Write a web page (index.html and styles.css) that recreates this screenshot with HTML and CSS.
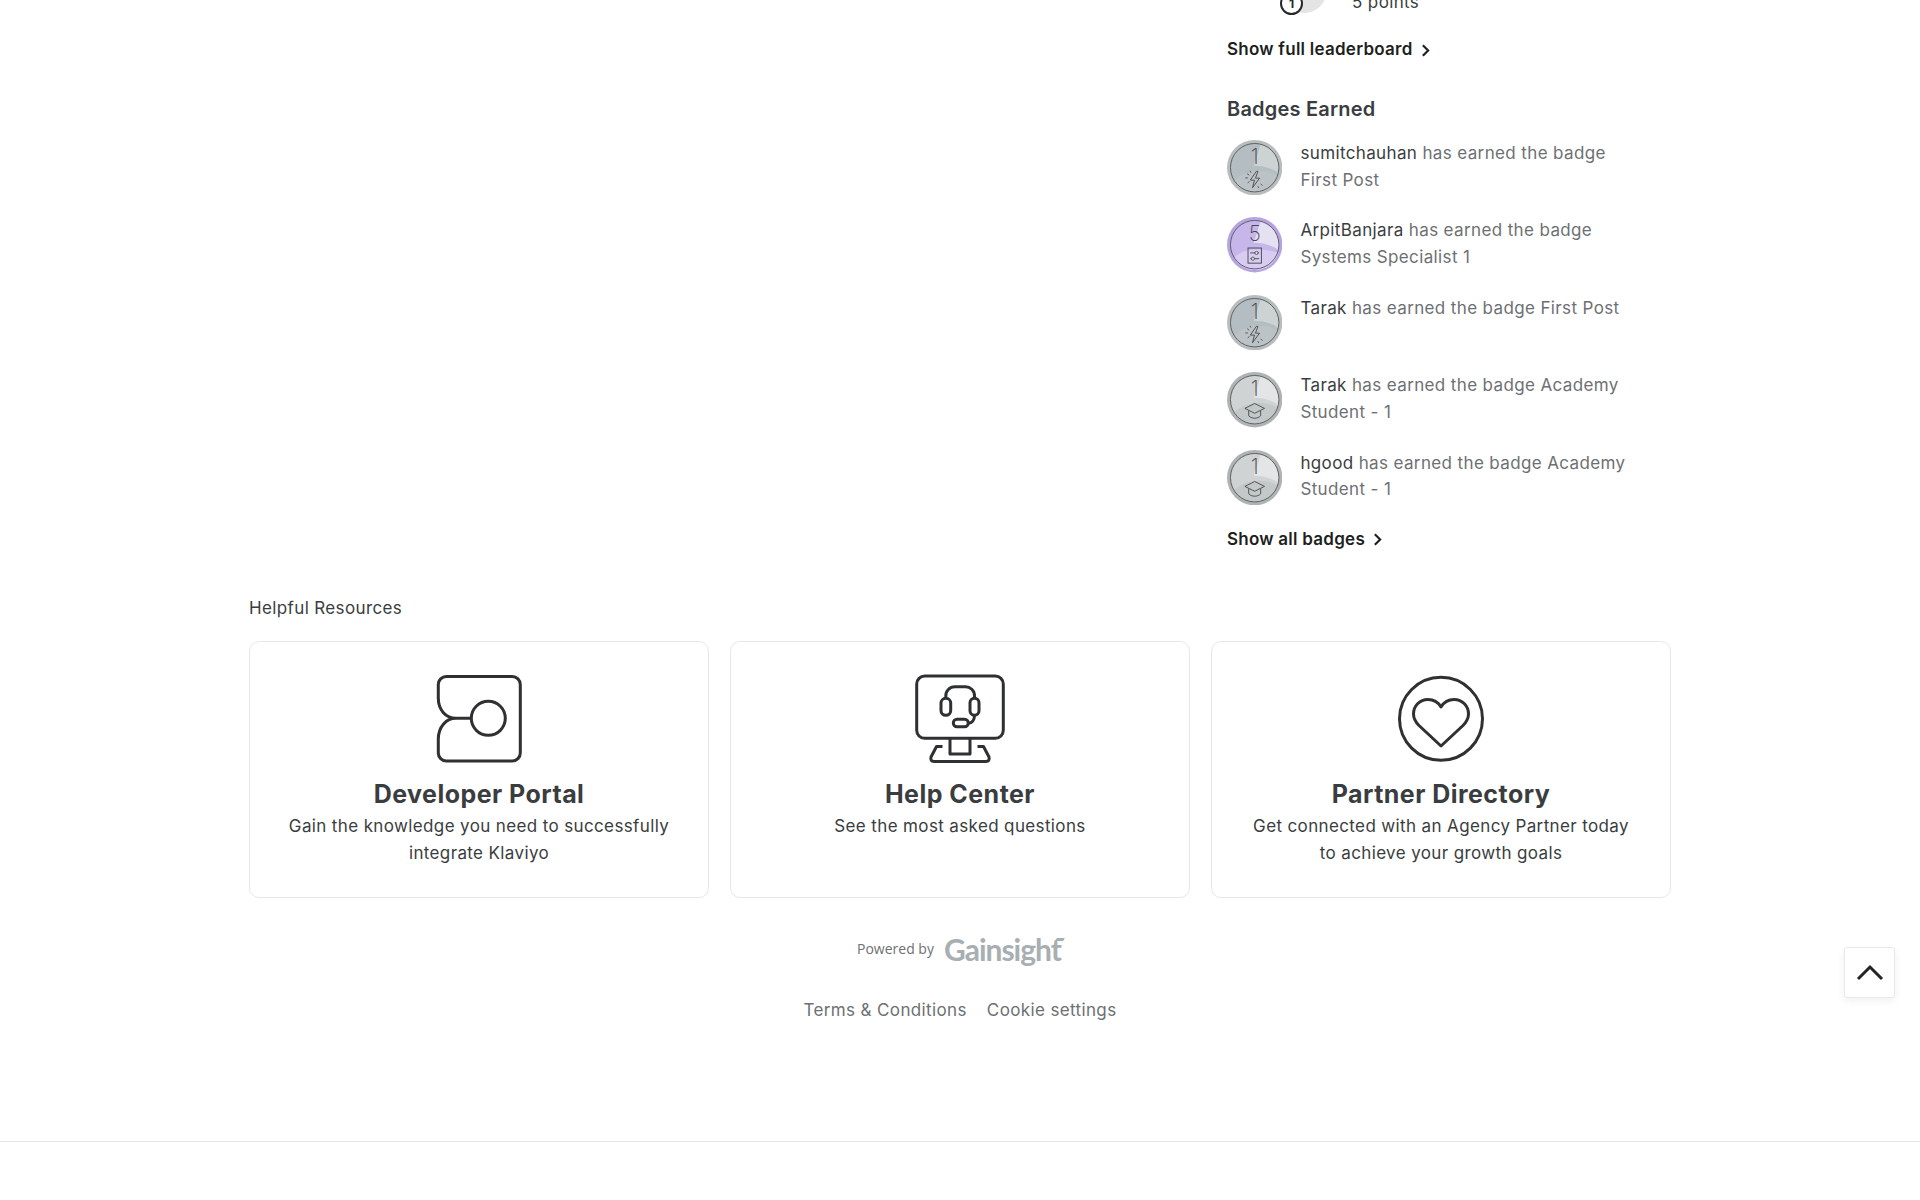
FILE: index.html
```html
<!DOCTYPE html>
<html lang="en">
<head>
<meta charset="utf-8">
<title>Community</title>
<link rel="stylesheet" href="styles.css">
</head>
<body>
<svg class="defs" width="0" height="0" aria-hidden="true">
  <defs>
    <symbol id="bolt" viewBox="0 0 20 20">
      <path d="M11.500 2.500 6 10.500h3.800l-1.800 7 6.500-8.800h-3.800l2.300-6.200z" fill="none" stroke="currentColor" stroke-width=".8" stroke-linejoin="round"/>
      <path d="M3 4.500 5 6M1.300 8.500h2.500M15.500 14l1.800 1.500M12.800 16l1 1.800M3.500 13l1.800-1.200M5.800 2l.8 1.700" fill="none" stroke="currentColor" stroke-width=".7"/>
    </symbol>
    <symbol id="grad" viewBox="0 0 20 20">
      <path d="M10 3.500 1 8l9 4.500L19 8zM4.500 10.200v4.600c1.500 1.500 3.500 2.200 5.500 2.200s4-.7 5.500-2.200v-4.600" fill="none" stroke="currentColor" stroke-width=".8" stroke-linejoin="round"/>
    </symbol>
    <symbol id="sliders" viewBox="0 0 20 20">
      <rect x="2.500" y="1.500" width="15" height="17" fill="none" stroke="currentColor" stroke-width="1"/>
      <path d="M5 7h10M5 13.500h10" fill="none" stroke="currentColor" stroke-width="1"/>
      <circle cx="12" cy="7" r="1.800" fill="#e4dcf5" stroke="currentColor" stroke-width=".9"/>
      <circle cx="8" cy="13.500" r="1.800" fill="#e4dcf5" stroke="currentColor" stroke-width=".9"/>
    </symbol>
    <symbol id="chev" viewBox="0 0 12 14">
      <path d="M3.500 2 8.500 7l-5 5" fill="none" stroke="currentColor" stroke-width="2"/>
    </symbol>
  </defs>
</svg>

<div class="page">
  <aside class="sidebar">
    <div class="leader-row">
      <div class="avatar-wrap">
        <span class="avatar"></span>
        <span class="rank">1</span>
      </div>
      <span class="points">5 points</span>
    </div>
    <a class="more more-first">Show full leaderboard <svg class="chev"><use href="#chev"/></svg></a>

    <h2 class="side-title">Badges Earned</h2>
    <ul class="badge-list">
      <li class="badge-row">
        <svg class="badge badge-slate" viewBox="0 0 56 56"><circle class="b-ring" cx="28" cy="28" r="28"/><circle class="b-face" cx="28" cy="28" r="24.500"/><path class="b-light" d="M27 26 34 4.500A24.500 24.500 0 0 1 52 33C44 28 36 26 27 26z"/><path class="b-low" d="M7 41C18 30 38 28 51 36A24.500 24.500 0 0 1 7 41z"/><circle class="b-line" cx="28" cy="28" r="24.500"/><text class="b-num" x="28" y="24.500">1</text><use class="b-ico" href="#bolt" x="17" y="29" width="22" height="22"/></svg>
        <p class="badge-text"><a class="who">sumitchauhan</a> has earned the badge First Post</p>
      </li>
      <li class="badge-row">
        <svg class="badge badge-purple" viewBox="0 0 56 56"><circle class="b-ring" cx="28" cy="28" r="28"/><circle class="b-face" cx="28" cy="28" r="24.500"/><path class="b-light" d="M27 26 34 4.500A24.500 24.500 0 0 1 52 33C44 28 36 26 27 26z"/><path class="b-low" d="M7 41C18 30 38 32 52 36A24.500 24.500 0 0 1 7 41z"/><circle class="b-line" cx="28" cy="28" r="24.500"/><text class="b-num" x="28" y="24.500">5</text><use class="b-ico" href="#sliders" x="19" y="30" width="18" height="18"/></svg>
        <p class="badge-text"><a class="who">ArpitBanjara</a> has earned the badge Systems Specialist 1</p>
      </li>
      <li class="badge-row">
        <svg class="badge badge-slate" viewBox="0 0 56 56"><circle class="b-ring" cx="28" cy="28" r="28"/><circle class="b-face" cx="28" cy="28" r="24.500"/><path class="b-light" d="M27 26 34 4.500A24.500 24.500 0 0 1 52 33C44 28 36 26 27 26z"/><path class="b-low" d="M7 41C18 30 38 28 51 36A24.500 24.500 0 0 1 7 41z"/><circle class="b-line" cx="28" cy="28" r="24.500"/><text class="b-num" x="28" y="24.500">1</text><use class="b-ico" href="#bolt" x="17" y="29" width="22" height="22"/></svg>
        <p class="badge-text"><a class="who">Tarak</a> has earned the badge First Post</p>
      </li>
      <li class="badge-row">
        <svg class="badge badge-silver" viewBox="0 0 56 56"><circle class="b-ring" cx="28" cy="28" r="28"/><circle class="b-face" cx="28" cy="28" r="24.500"/><path class="b-light" d="M27 26 34 4.500A24.500 24.500 0 0 1 52 33C44 28 36 26 27 26z"/><path class="b-low" d="M7 41C18 30 38 28 51 36A24.500 24.500 0 0 1 7 41z"/><circle class="b-line" cx="28" cy="28" r="24.500"/><text class="b-num" x="28" y="24.500">1</text><use class="b-ico" href="#grad" x="17" y="28" width="22" height="22"/></svg>
        <p class="badge-text"><a class="who">Tarak</a> has earned the badge Academy Student - 1</p>
      </li>
      <li class="badge-row">
        <svg class="badge badge-silver" viewBox="0 0 56 56"><circle class="b-ring" cx="28" cy="28" r="28"/><circle class="b-face" cx="28" cy="28" r="24.500"/><path class="b-light" d="M27 26 34 4.500A24.500 24.500 0 0 1 52 33C44 28 36 26 27 26z"/><path class="b-low" d="M7 41C18 30 38 28 51 36A24.500 24.500 0 0 1 7 41z"/><circle class="b-line" cx="28" cy="28" r="24.500"/><text class="b-num" x="28" y="24.500">1</text><use class="b-ico" href="#grad" x="17" y="28" width="22" height="22"/></svg>
        <p class="badge-text"><a class="who">hgood</a> has earned the badge Academy Student - 1</p>
      </li>
    </ul>
    <a class="more more-badges">Show all badges <svg class="chev"><use href="#chev"/></svg></a>
  </aside>

  <section class="resources">
    <h3 class="res-title">Helpful Resources</h3>
    <div class="cards">
      <a class="card">
        <svg class="card-ico" viewBox="0 0 90 90">
          <path d="M12.300 2.500H78.300a8 8 0 0 1 8 8V79a8 8 0 0 1-8 8H12.300a8 8 0 0 1-8-8V65C4.300 53 12 44.300 22 44.300H37.300M22 44.300C12 44.300 4.300 36 4.300 24V10.500a8 8 0 0 1 8-8"/>
          <circle cx="54.300" cy="44.300" r="17"/>
        </svg>
        <h4 class="card-title">Developer Portal</h4>
        <p class="card-desc">Gain the knowledge you need to successfully integrate Klaviyo</p>
      </a>
      <a class="card">
        <svg class="card-ico" viewBox="0 0 90 90">
          <rect x="1.700" y="2" width="86.600" height="62.300" rx="8"/>
          <path d="M35 64.300V80H55V64.300M27.500 72.500H21.500L16 83Q15 87.500 19 87.500H71Q75 87.500 74 83L68.500 72.500H62.500"/>
          <rect x="26" y="24.300" width="9.700" height="17" rx="4.800"/>
          <rect x="55" y="24.300" width="9" height="17" rx="4.500"/>
          <path d="M30.800 24.300V22a9 9 0 0 1 9-9.300H50a9 9 0 0 1 9.500 9.300v2.300M59.500 41.300C59.500 46 57 49 53.300 49.300"/>
          <rect x="38.300" y="45.300" width="15" height="7.400" rx="3.700"/>
        </svg>
        <h4 class="card-title">Help Center</h4>
        <p class="card-desc">See the most asked questions</p>
      </a>
      <a class="card">
        <svg class="card-ico" viewBox="0 0 90 90">
          <circle cx="45" cy="44.800" r="41.500"/>
          <path d="M45 33C42 28 37 25.500 32 25.500 23.500 25.500 17.500 32 17.500 40 17.500 45 20 48.500 23 51.500L45 72 67 51.500C70 48.500 72.500 45 72.500 40 72.500 32 66.500 25.500 58 25.500 53 25.500 48 28 45 33z"/>
        </svg>
        <h4 class="card-title">Partner Directory</h4>
        <p class="card-desc">Get connected with an Agency Partner today to achieve your growth goals</p>
      </a>
    </div>
  </section>

  <div class="powered">
    <span class="powered-by">Powered by</span>
    <span class="gainsight">Gainsight</span>
  </div>
  <nav class="legal">
    <a>Terms &amp; Conditions</a>
    <a>Cookie settings</a>
  </nav>
</div>

<div class="footer-line"></div>

<button class="to-top" aria-label="Back to top">
  <svg viewBox="0 0 30 20" width="30" height="20"><path d="M3 16 15 4l12 12"/></svg>
</button>
</body>
</html>
```
FILE: styles.css
```css
* { box-sizing: border-box; }
html, body { margin: 0; padding: 0; height: 1200px; overflow: hidden; background: #fff; }
body { font-family: Inter, "Liberation Sans", sans-serif; color: #3a3d40; font-size: 17px; line-height: 26.67px; letter-spacing: .37px; position: relative; }
a { color: inherit; text-decoration: none; }
p, h2, h3, h4, ul { margin: 0; padding: 0; }
ul { list-style: none; }
.defs { display: block; height: 0; }

.page { width: 1422px; margin: 0 auto; }

/* sidebar */
.sidebar { margin: -27px 0 0 978px; width: 408px; display: flex; flex-direction: column; align-items: flex-start; }
.leader-row { display: flex; height: 40px; align-items: flex-end; padding-left: 54px; }
.avatar-wrap { position: relative; width: 46px; height: 46px; margin-right: 25px; flex: none; }
.avatar { display: block; width: 46px; height: 46px; border-radius: 50%; background: #e4e4e4; }
.rank { position: absolute; left: -1px; bottom: -2px; width: 23px; height: 23px; border-radius: 50%; border: 2px solid #26282a; background: #fff; color: #26282a; font-size: 12px; font-weight: 700; line-height: 19px; letter-spacing: 0; text-align: center; }
.points { font-size: 17px; line-height: 20px; color: #3a3d40; margin-bottom: 1px; }

.more { display: inline-flex; align-items: center; gap: 6px; font-size: 17px; font-weight: 600; line-height: 24px; letter-spacing: .25px; color: #1d1f21; }
.chev { width: 13px; height: 15px; color: #1d1f21; margin-top: 2px; }
.more-first { margin-top: 24px; }
.more-badges { margin-top: 22px; }
.side-title { margin-top: 34px; font-size: 20px; font-weight: 600; line-height: 28px; letter-spacing: .2px; color: #3a3d40; }

.badge-list { margin-top: 17px; display: flex; flex-direction: column; gap: 22px; }
.badge-row { display: flex; gap: 18px; min-height: 55.400px; }
.badge { width: 55.400px; height: 55.400px; flex: none; }
.badge-text { color: #6d7073; flex: 1; }
.who { color: #3a3d40; }

.b-line { fill: none; stroke: #5b6165; stroke-width: 1; }
.b-num { font-family: Inter, sans-serif; font-size: 21px; font-weight: 200; letter-spacing: 0; text-anchor: middle; fill: #44494d; }
.b-ico { color: #3f4447; }

.badge-slate .b-ring { fill: #b9bdbe; }
.badge-slate .b-face { fill: #b4bdc1; }
.badge-slate .b-light { fill: #cdd3d2; }
.badge-slate .b-low { fill: #bcc3c6; }

.badge-silver .b-ring { fill: #b0b3b4; }
.badge-silver .b-face { fill: #d0d3d3; }
.badge-silver .b-light { fill: #e4e6e6; }
.badge-silver .b-low { fill: #c3c8c8; }

.badge-purple .b-ring { fill: #b8a3e2; }
.badge-purple .b-face { fill: #c7b6ea; }
.badge-purple .b-light { fill: #e6e0f3; }
.badge-purple .b-low { fill: #d8cdf0; }

/* resources */
.resources { margin-top: 44px; }
.res-title { font-size: 17px; font-weight: 400; line-height: 26px; color: #3a3d40; }
.cards { margin-top: 20px; display: grid; grid-template-columns: repeat(3, 460px); gap: 21px; }
.card { height: 257px; border: 1px solid #e7e7e7; border-radius: 10px; padding: 32px 34px 0; display: flex; flex-direction: column; align-items: center; text-align: center; background: #fff; }
.card-ico { width: 90px; height: 90px; flex: none; fill: none; stroke: #2e3032; stroke-width: 3; stroke-linejoin: round; }
.card-title { margin-top: 14px; font-size: 25px; font-weight: 700; line-height: 32px; letter-spacing: .46px; color: #3a3d40; }
.card-desc { margin-top: 3px; color: #3a3d40; }

/* footer */
.powered { margin-top: 31px; display: flex; justify-content: center; align-items: center; gap: 10px; height: 40px; letter-spacing: 0; }
.powered-by { font-family: "Open Sans", sans-serif; font-size: 14px; color: #6d7073; margin-left: -2px; }
.gainsight { position: relative; font-family: Lato, sans-serif; font-size: 30px; font-weight: 700; letter-spacing: -1px; color: #a8afb2; line-height: 40px; }
.gainsight::after { content: ""; position: absolute; right: -3px; top: 9px; width: 8px; height: 3px; background: #a8afb2; transform: skewX(-30deg); }
.legal { margin-top: 28px; display: flex; justify-content: center; gap: 20px; color: #6d7073; }

.footer-line { position: absolute; left: 0; right: 0; top: 1141px; height: 1px; background: #e6e6e6; }

.to-top { position: absolute; left: 1844px; top: 947px; width: 51px; height: 51px; padding: 0; background: #fff; border: 1px solid #e8e8e8; border-radius: 3px; box-shadow: 0 3px 8px rgba(0,0,0,.06); display: flex; align-items: center; justify-content: center; }
.to-top svg { fill: none; stroke: #222426; stroke-width: 3; }
```
